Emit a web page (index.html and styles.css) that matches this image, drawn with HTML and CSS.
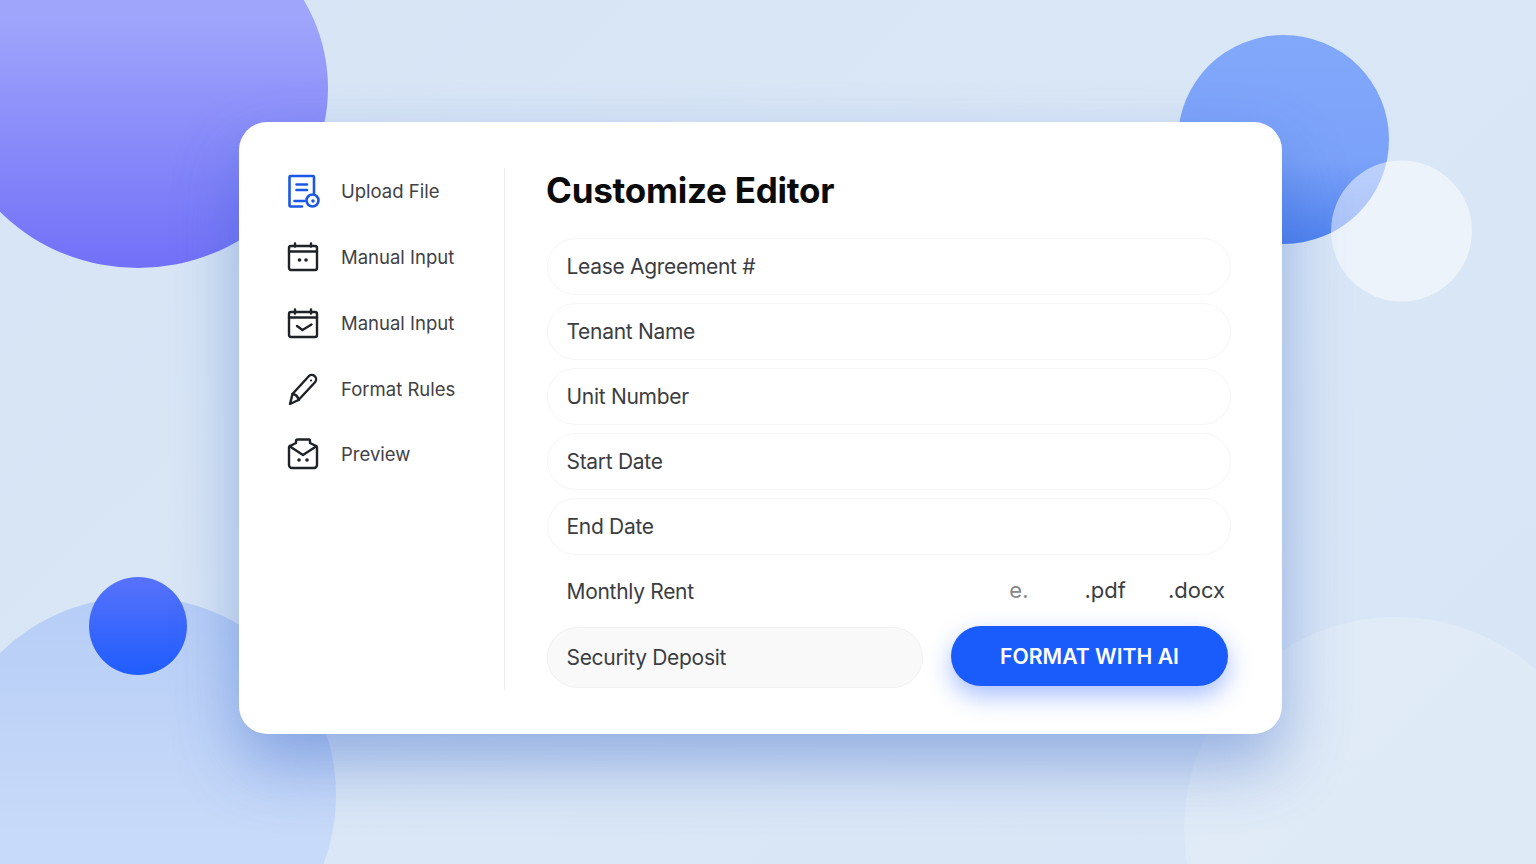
FILE: index.html
```html
<!DOCTYPE html>
<html lang="en">
<head>
	<meta charset="UTF-8">
	<title>Customize Editor</title>
	<link rel="stylesheet" href="styles.css">
</head>
<body>

<!-- background circles, the card sits over them -->
	<svg class="backdrop" viewBox="0 0 1536 864">
		<defs>
			<linearGradient id="violet" x1="0" y1="0" x2="0" y2="1">
				<stop offset=".3" stop-color="#9fa5fb"/>
				<stop offset="1" stop-color="#7270f8"/>
			</linearGradient>
			<linearGradient id="blue" x1="0" y1="0" x2="0" y2="1">
				<stop offset="0" stop-color="#82a8fb"/>
				<stop offset=".6" stop-color="#7ba2f9"/>
				<stop offset="1" stop-color="#4f82ef"/>
			</linearGradient>
			<linearGradient id="soft" x1="0" y1="0" x2="0" y2="1">
				<stop offset="0" stop-color="#b6cdf6"/>
				<stop offset=".6" stop-color="#c8daf9"/>
				<stop offset="1" stop-color="#c6d8f8"/>
			</linearGradient>
			<linearGradient id="strong" x1="0" y1="0" x2="0" y2="1">
				<stop offset="0" stop-color="#5772fb"/>
				<stop offset="1" stop-color="#1f5dfd"/>
			</linearGradient>
		</defs>
		<ellipse cx="138" cy="88" rx="190" ry="180" fill="url(#violet)"/>
		<ellipse cx="1283.500" cy="139.500" rx="105.500" ry="104.500" fill="url(#blue)"/>
		<circle cx="1401.500" cy="231" r="70.500" fill="#ffffff" fill-opacity=".5"/>
		<circle cx="138" cy="795" r="198" fill="url(#soft)"/>
		<circle cx="138" cy="626" r="49" fill="url(#strong)"/>
		<circle cx="1396" cy="829" r="212" fill="#ffffff" fill-opacity=".2"/>
	</svg>

	<div class="card">

		<!-- left menu -->
		<div class="menu">
			<div class="menu-item">
				<svg class="menu-icon icon-blue" viewBox="0 0 34 34">
					<path d="M15 32.500H3.500a1 1 0 0 1-1-1V3a1 1 0 0 1 1-1H26a1 1 0 0 1 1 1v16"/>
					<path d="M9.500 10.500h10.500M9.500 16h10.500M7.500 27h10"/>
					<circle class="badge" cx="25.500" cy="26.500" r="6"/>
					<circle class="badge-dot" cx="26" cy="27" r="1.800"/>
				</svg>
				<span>Upload File</span>
			</div>
			<div class="menu-item">
				<svg class="menu-icon" viewBox="0 0 34 34">
					<rect x="2" y="6" width="28" height="24" rx="2"/>
					<path d="M2 11.500h28M8 3.500v3M24 3.500v3"/>
					<circle class="dot" cx="12.500" cy="20" r="1.800"/>
					<circle class="dot" cx="19" cy="20" r="1.800"/>
				</svg>
				<span>Manual Input</span>
			</div>
			<div class="menu-item">
				<svg class="menu-icon" viewBox="0 0 34 34">
					<rect x="2" y="6" width="28" height="25" rx="2"/>
					<path d="M2 11.500h28M8 3.500v4M24 3.500v4"/>
					<path d="M10 20l5.500 4 9-5.500"/>
				</svg>
				<span>Manual Input</span>
			</div>
			<div class="menu-item">
				<svg class="menu-icon" viewBox="0 0 34 34">
					<path d="M3 32l2.500-10L21.500 4.500a4.300 4.300 0 0 1 6.500 5.800L11.500 28z"/>
					<path d="M5.500 22c3 .3 5.500 2.800 6 6"/>
					<circle class="dot" cx="24" cy="8.500" r="1.100"/>
				</svg>
				<span>Format Rules</span>
			</div>
			<div class="menu-item">
				<svg class="menu-icon" viewBox="0 0 34 34">
					<path d="M9 6V4a1.500 1.500 0 0 1 1.500-1.500h11.500A1.500 1.500 0 0 1 23 4v2l5 2.500A2.500 2.500 0 0 1 30 11v17a3 3 0 0 1-3 3H5a3 3 0 0 1-3-3V11a2.500 2.500 0 0 1 2-2.500z"/>
					<path d="M3 9.500l13 8.500 13-8.500"/>
					<circle class="dot" cx="12" cy="23" r="1.800"/>
					<circle class="dot" cx="20" cy="23" r="1.800"/>
				</svg>
				<span>Preview</span>
			</div>
		</div>

		<!-- form -->
		<div class="editor">
			<h1>Customize Editor</h1>

			<div class="field-list">
				<div class="field">Lease Agreement #</div>
				<div class="field">Tenant Name</div>
				<div class="field">Unit Number</div>
				<div class="field">Start Date</div>
				<div class="field">End Date</div>

				<div class="file-row">
					<span class="file-label">Monthly Rent</span>
					<span class="file-type file-e">e.</span>
					<span class="file-type file-pdf">.pdf</span>
					<span class="file-type">.docx</span>
				</div>

				<div class="submit-row">
					<div class="field field-gray">Security Deposit</div>
					<a class="format-btn" href="javascript:;">FORMAT WITH AI</a>
				</div>
			</div>
		</div>

	</div>

</body>
</html>
```

FILE: styles.css
```css
* {
    box-sizing: border-box;
}

html,
body {
    margin: 0;
    padding: 0;
}

body {
    position: relative;
    overflow: hidden;
    height: 864px;
    padding: 122px 254px 130px 239px;
    background: linear-gradient(135deg, #d6e4f5 0%, #dae7f6 50%, #d8e5f6 100%);
    font-family: Inter, "Liberation Sans", sans-serif;
    color: #3b3d41;
}

.backdrop {
    position: absolute;
    left: 0;
    top: 0;
    display: block;
    width: 1536px;
    height: 864px;
}

.card {
    position: relative;
    display: flex;
    width: 1043px;
    height: 612px;
    padding: 46px 51px 44px 48px;
    background: #ffffff;
    border-radius: 28px;
    box-shadow: 0 30px 64px rgba(50, 95, 195, .42);
}

/* left menu */
.menu {
    display: flex;
    flex-direction: column;
    gap: 31.850px;
    flex: none;
    width: 218px;
    padding-top: 6px;
    border-right: 1px solid #ececec;
}

.menu-item {
    display: flex;
    align-items: center;
    gap: 20px;
    height: 34px;
    font-size: 18.500px;
    color: #3f4145;
}

.menu-icon {
    flex: none;
    width: 34px;
    height: 34px;
    fill: none;
    stroke: #1f2226;
    stroke-width: 2.400;
    stroke-linecap: round;
    stroke-linejoin: round;
}

.icon-blue {
    stroke: #1b57e6;
    stroke-width: 2.600;
}

.menu-icon .dot {
    fill: #1f2226;
    stroke: none;
}

.menu-icon .badge {
    fill: #ffffff;
}

.menu-icon .badge-dot {
    fill: #1b57e6;
    stroke: none;
}

/* form */
.editor {
    flex: 1;
    padding-left: 42px;
}

.editor h1 {
    margin: 0 0 26px -1px;
    height: 44px;
    line-height: 44px;
    font-size: 35px;
    font-weight: 700;
    color: #0b0b0c;
    letter-spacing: -.25px;
}

.field-list {
    display: flex;
    flex-direction: column;
    gap: 8px;
}

.field {
    height: 57px;
    line-height: 56px;
    padding-left: 18.500px;
    border: 1px solid #f6f6f6;
    border-radius: 29px;
    font-size: 21px;
    letter-spacing: -.3px;
}

.file-row {
    display: flex;
    align-items: center;
    height: 56px;
    padding: 0 6px 0 19.500px;
    font-size: 21px;
    letter-spacing: -.3px;
}

.file-label {
    flex: 1;
}

.file-type {
    margin-top: -2px;
    color: #3b3d41;
    font-size: 22px;
    letter-spacing: 0;
}

.file-e {
    margin-right: 56px;
    color: #85878a;
}

.file-pdf {
    margin-right: 42px;
}

.submit-row {
    display: flex;
    align-items: flex-start;
    justify-content: space-between;
    margin-top: -1px;
    padding-right: 3px;
}

.field-gray {
    width: 376px;
    height: 61px;
    line-height: 59px;
    margin-top: 1px;
    background: #f9f9f9;
    border-color: #f1f1f1;
    border-radius: 31px;
}

.format-btn {
    display: block;
    width: 277px;
    height: 60px;
    line-height: 60px;
    text-align: center;
    text-decoration: none;
    font-size: 21.200px;
    font-weight: 600;
    color: #ffffff;
    background: #1a5cfb;
    border-radius: 30px;
    box-shadow: 0 10px 24px rgba(30, 90, 250, .38);
}
```
